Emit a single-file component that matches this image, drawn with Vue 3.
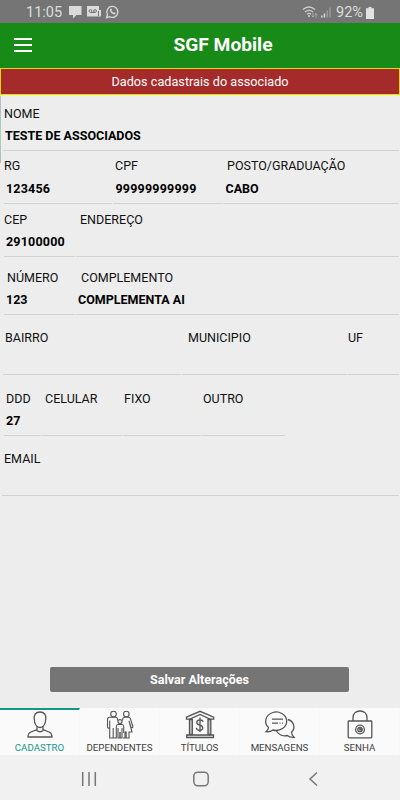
<template>
    <div class="screen">
        <div class="statusBar">
            <span class="statusBar__time">11:05</span>
            <svg class="statusBar__notes" width="52" height="14" viewBox="0 0 52 14">
                <path d="M1 1h12.500v9H8.500l-3.500 3.400V10H1z" fill="#dadada" />
                <path d="M19 1h12v4h2v6.500H19z" fill="#dadada" />
                <g fill="none" stroke="#757575">
                    <circle cx="22.500" cy="6" r="1.400" />
                    <circle cx="27" cy="6" r="1.400" />
                    <path d="M22.500 7.500H27M30.500 6v5" />
                </g>
                <path d="M38.600 12.700l.9-3.200a5.500 5.500 0 1 1 2.200 2.200z" fill="none" stroke="#dadada" stroke-width="1.300" />
                <path d="M42.200 4c.8-.9 1.300-.5 1.700.8l-.5 1 2 2 1-.5c1.500.5 1.600 1 .7 1.800-1.800 1.500-6.300-2.800-4.900-5.100z" fill="#dadada" />
            </svg>
            <svg class="statusBar__signal" width="30" height="14" viewBox="0 0 30 14">
                <g fill="none" stroke="#d0d0d0" stroke-width="1.300">
                    <path d="M1 4.500q5.800-5 12 0M3 7q4-3.200 8 0M5 9.200q2-1.500 4 0" />
                </g>
                <circle cx="7" cy="11" r="1.100" fill="#d0d0d0" />
                <path d="M11 8v4m-1.300-1.300L11 12l1.300-1.300M14 12.500v-4m-1.300 1.300L14 8.500l1.300 1.300" fill="none" stroke="#b5b5b5" stroke-width=".8" />
                <path d="M19 10.500h1.500v2H19zM21.700 8.500h1.500v4h-1.500z" fill="#dadada" />
                <path d="M24.600 5.500h1.500v7h-1.500zM27.300 2.500h1.500v10h-1.500z" fill="#9c9c9c" />
            </svg>
            <span class="statusBar__battery">92%</span>
            <svg width="8" height="12" viewBox="0 0 8 12">
                <path d="M2.500 0h3v1.300H8V12H0V1.300h2.500z" fill="#e2e2e2" />
            </svg>
        </div>

        <header class="toolbar">
            <button class="toolbar__menu" aria-label="Menu">
                <span></span>
                <span></span>
                <span></span>
            </button>
            <h1 class="toolbar__title">SGF Mobile</h1>
        </header>

        <div class="banner">Dados cadastrais do associado</div>

        <main class="content">
            <div v-for="row in rows" :key="row.name" class="row" :class="'row--' + row.name">
                <div v-for="field in row.fields" :key="field.label" class="field" :class="'field--' + field.key">
                    <label class="field__label">{{ field.label }}</label>
                    <div class="field__value">{{ field.value }}</div>
                </div>
            </div>
            <button class="saveBtn">Salvar Alterações</button>
        </main>

        <nav class="tabs">
            <button v-for="(tab, index) in tabs" :key="tab.icon" class="tab" :class="{ 'tab--active': index === activeTab }" @click="activeTab = index">
                <svg class="tab__icon" width="32" height="32" viewBox="0 0 32 32">
                    <g v-if="tab.icon === 'person'">
                        <path d="M16 3c-4.500 0-6.200 3-5.800 7 .3 5 2.600 8.500 5.800 8.500s5.500-3.500 5.800-8.500c.4-4-1.300-7-5.800-7z" />
                        <path d="M13 17v3.500L7 23c-2 .8-3 2.500-3 5h24c0-2.500-1-4.200-3-5l-6-2.500V17M12.500 21q3.500 3.500 7 0" />
                    </g>
                    <g v-else-if="tab.icon === 'family'" stroke-width="1.100">
                        <circle cx="9.500" cy="5" r="2.800" />
                        <circle cx="22.300" cy="5" r="2.800" />
                        <circle cx="16" cy="12.600" r="2" />
                        <path d="M13.500 11.500V10c0-1.300-.6-1.700-2-1.700H5.500C4 8.300 3.500 9 3.500 10.500V18c0 1.500 2.200 1.500 2.200 0v-6.500V29h3.500V19M9.300 29h3V24" />
                        <path d="M18.500 11.500l.3-2c.3-1 .8-1.200 2-1.200h3.700c1.200 0 1.700.7 2 1.700l2.300 7.500c.3 1.300-1.300 1.800-1.800.6l-2-6.300 3 11.200h-3V29h-2.800v-6h-1.200v6h-2" />
                        <path d="M12.300 24v-6.500c0-1.500.5-2 1.800-2h3.800c1.300 0 1.800.5 1.800 2V24M14 19v10h1.800v-5.500h.4V29H18V19" />
                    </g>
                    <g v-else-if="tab.icon === 'bank'">
                        <path d="M5.500 10.500h2.800v15H5.500zM24 10.500h2.800v15H24zM2.700 26h26.800v2.600H2.700z" fill="#c4c4c4" />
                        <path d="M2.500 8.200L16 2.300l13.700 5.900v2H26L16 5.500 6 10.200H2.500z" />
                        <path d="M19.300 12.800c-.5-1.500-1.500-2-3.300-2-4 0-4.200 4.300-.8 5 4.800 1 4.600 5.500.6 5.500-2.100 0-3.200-.8-3.500-2.500M16 8.600v14.500" stroke-width="1.300" />
                    </g>
                    <g v-else-if="tab.icon === 'chat'">
                        <path d="M4.500 18.500A10.500 9.200 0 1 1 9 21c-1.500 1.200-4 2-7 1.700 1.500-1.300 2.300-2.500 2.500-4.200z" />
                        <path d="M23.800 10.500c6 1.500 8.200 8.500 3.700 12.800.2 2.200 1 3.700 2.500 5-3.200.3-5.300-.5-6.700-1.800-5 1-9-1.500-10.800-4.500" />
                        <path d="M8 10.200h11M8 14.200h6M15.500 14.200h1M18 14.200h1" />
                    </g>
                    <g v-else>
                        <path d="M5 12h22c.5 0 .8.3.8.800v15.200c0 .5-.3.800-.8.800H5c-.5 0-.8-.3-.8-.8V12.800c0-.5.3-.8.800-.8z" />
                        <path d="M9 12V8.700C9 4.500 12 2 16 2s7 2.500 7 6.700V12" />
                        <circle cx="16" cy="20.500" r="4.400" />
                        <circle cx="16" cy="20.500" r="2.200" />
                        <path d="M16 18.500v2.200h2.200" stroke-width="1.600" />
                    </g>
                </svg>
                <span class="tab__label">{{ tab.label }}</span>
            </button>
        </nav>

        <div class="systemNav">
            <svg width="16" height="16" viewBox="0 0 16 16"><path d="M1.700 1v14M8 1v14M14.300 1v14" /></svg>
            <svg width="16" height="16" viewBox="0 0 16 16"><rect x=".8" y="1.200" width="14.400" height="13.600" rx="4" /></svg>
            <svg width="16" height="16" viewBox="0 0 16 16"><path d="M12 1.500L5 8l7 6.500" /></svg>
        </div>
    </div>
</template>

<script setup>
import { ref } from 'vue';

const activeTab = ref(0);

const rows = [
    { name: 'nome', fields: [{ key: 'nome', label: 'NOME', value: 'TESTE DE ASSOCIADOS' }] },
    {
        name: 'docs',
        fields: [
            { key: 'rg', label: 'RG', value: '123456' },
            { key: 'cpf', label: 'CPF', value: '99999999999' },
            { key: 'posto', label: 'POSTO/GRADUAÇÃO', value: 'CABO' }
        ]
    },
    {
        name: 'cep',
        fields: [
            { key: 'cep', label: 'CEP', value: '29100000' },
            { key: 'endereco', label: 'ENDEREÇO', value: '' }
        ]
    },
    {
        name: 'numero',
        fields: [
            { key: 'numero', label: 'NÚMERO', value: '123' },
            { key: 'complemento', label: 'COMPLEMENTO', value: 'COMPLEMENTA AI' }
        ]
    },
    {
        name: 'bairro',
        fields: [
            { key: 'bairro', label: 'BAIRRO', value: '' },
            { key: 'municipio', label: 'MUNICIPIO', value: '' },
            { key: 'uf', label: 'UF', value: '' }
        ]
    },
    {
        name: 'fones',
        fields: [
            { key: 'ddd', label: 'DDD', value: '27' },
            { key: 'celular', label: 'CELULAR', value: '' },
            { key: 'fixo', label: 'FIXO', value: '' },
            { key: 'outro', label: 'OUTRO', value: '' }
        ]
    },
    { name: 'email', fields: [{ key: 'email', label: 'EMAIL', value: '' }] }
];

const tabs = [
    { icon: 'person', label: 'CADASTRO' },
    { icon: 'family', label: 'DEPENDENTES' },
    { icon: 'bank', label: 'TÍTULOS' },
    { icon: 'chat', label: 'MENSAGENS' },
    { icon: 'lock', label: 'SENHA' }
];
</script>

<style>
body {
    margin: 0;
    background-color: #ededed;
}
</style>

<style scoped>
.screen {
    display: flex;
    flex-direction: column;
    width: 400px;
    height: 800px;
    overflow: hidden;
    background-color: #ededed;
    font-family: Roboto, "Liberation Sans", sans-serif;
    color: #111;
}

.screen * {
    box-sizing: border-box;
}

button {
    padding: 0;
    border: none;
    background: transparent;
    font-family: inherit;
}

.statusBar {
    display: flex;
    align-items: center;
    height: 23px;
    padding: 2px 26px 0 26px;
    background-color: #757575;
    color: #dcdcdc;
    font-size: 14.5px;
}

.statusBar__time {
    width: 42px;
}

.statusBar__notes {
    margin-top: -1px;
}

.statusBar__signal {
    margin-left: auto;
    margin-top: -1px;
    margin-right: 4px;
}

.statusBar__battery {
    width: 30px;
}

.toolbar {
    display: flex;
    align-items: center;
    height: 45px;
    background-color: #188a18;
    color: #fff;
}

.toolbar__menu {
    display: flex;
    flex-direction: column;
    gap: 4px;
    width: 18px;
    margin: -1px 0 0 14px;
}

.toolbar__menu span {
    height: 2px;
    background-color: #fff;
}

.toolbar__title {
    flex: 1;
    margin: -2px 0 0 14px;
    text-align: center;
    font-size: 19.2px;
    font-weight: 700;
}

.banner {
    height: 27px;
    margin-bottom: 1px;
    border: 1px solid #e6dc00;
    background-color: #a52a2a;
    box-shadow: 0 1px #eef2c4;
    color: #fff;
    font-size: 12.7px;
    line-height: 26px;
    text-align: center;
}

.content {
    position: relative;
    display: flex;
    flex-direction: column;
    flex: 1;
}

/* edge of the drawer shadow */
.content::before {
    content: "";
    position: absolute;
    top: 0;
    left: 0;
    width: 1px;
    height: 67px;
    background: linear-gradient(#b5bfd6, #9fd4b4 60%, #b9b9b9);
}

.row {
    display: grid;
    gap: 1px;
    height: 60px;
    padding: 0 1px 0 4px;
}

.row--nome {
    height: 55px;
    padding-left: 3px;
}

.row--docs {
    grid-template-columns: 108px 109px 1fr;
    height: 53px;
}

.row--cep,
.row--numero {
    grid-template-columns: 71px 1fr;
    height: 53px;
}

.row--numero {
    height: 58px;
}

.row--bairro {
    grid-template-columns: 178px 165px 1fr;
    padding-left: 3px;
}

.row--fones {
    grid-template-columns: 37px 80px 78px 83px;
    height: 61px;
}

.row--email {
    padding-left: 2px;
}

.field {
    display: flex;
    flex-direction: column;
    justify-content: flex-end;
    padding-bottom: 2px;
    border-bottom: 1px solid #d2d2d2;
    font-size: 12.5px;
    white-space: nowrap;
}

.field__label {
    height: 22px;
    padding-left: 1px;
    line-height: 23px;
}

.row--docs .field__label {
    line-height: 22px;
}

.field__value {
    height: 24px;
    padding-left: 2px;
    line-height: 24px;
    font-weight: 700;
    color: #000;
}

.field--rg .field__label,
.field--cep .field__label {
    padding-left: 0;
}

.field--rg .field__value,
.field--cpf .field__value,
.field--cep .field__value {
    letter-spacing: 0.2px;
}

.field--cpf .field__label,
.field--bairro .field__label,
.field--email .field__label {
    padding-left: 2px;
}

.field--cpf .field__value,
.field--posto .field__value {
    padding-left: 2.5px;
}

.field--numero .field__label,
.field--celular .field__label {
    padding-left: 3px;
}

.field--posto .field__label,
.field--endereco .field__label {
    padding-left: 4px;
}

.field--complemento .field__label {
    padding-left: 5px;
}

.field--municipio .field__label {
    padding-left: 6px;
}

.field--uf .field__label {
    padding-left: 0;
}

.field--ddd .field__label {
    padding-left: 2px;
}

.saveBtn {
    width: 299px;
    height: 25px;
    margin: auto auto 16px 50px;
    border-radius: 2px;
    background-color: #757575;
    color: #fff;
    font-size: 12.5px;
    font-weight: 700;
}

.tabs {
    display: grid;
    grid-template-columns: repeat(5, 1fr);
    height: 47px;
    background-color: #fafafa;
}

.tab {
    display: flex;
    flex-direction: column;
    align-items: center;
    border-top: 2px solid transparent;
    border-right: 1px solid #f7f7f7;
    color: #404040;
}

.tab--active {
    border-top-color: #12978a;
    color: #12978a;
}

.tab__icon {
    flex-shrink: 0;
    margin-top: -1px;
    fill: none;
    stroke: #555;
    stroke-width: 1.3;
}

.tab__label {
    margin-top: 1px;
    font-size: 9.7px;
    line-height: 12px;
}

.systemNav {
    display: flex;
    justify-content: space-between;
    align-items: center;
    height: 45px;
    padding: 3px 79px 0 81px;
    background-color: #f1f1f1;
}

.systemNav svg {
    fill: none;
    stroke: #777;
    stroke-width: 1.5;
}
</style>
